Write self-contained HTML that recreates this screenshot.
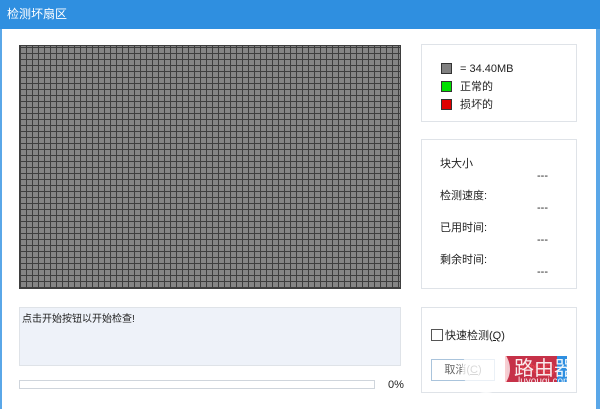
<!DOCTYPE html>
<html><head><meta charset="utf-8"><style>
body{margin:0;width:600px;height:409px;overflow:hidden;background:#fff;font-family:"Liberation Sans","Noto Sans CJK SC",sans-serif;font-size:11px;color:#222;position:relative}
.abs{position:absolute}
.title{left:0;top:0;width:600px;height:29px;background:#2f8fe0;color:#fff;font-size:12px;line-height:29px;text-indent:7px}
.bl{left:0;top:29px;width:2px;height:380px;background:#5aa7e8}
.br{left:596px;top:29px;width:4px;height:380px;background:#5aa7e8}
.grid{left:19px;top:45px;width:382px;height:244px;background-color:#858585;
background-image:repeating-linear-gradient(90deg,#3e3e3e 0 1px,transparent 1px 6px),repeating-linear-gradient(0deg,#3e3e3e 0 1px,transparent 1px 6px);border:1px solid #3e3e3e;box-sizing:border-box}
.box{border:1px solid #dfe3e8;box-sizing:border-box}
.sq{display:inline-block;width:9px;height:9px;border:1px solid #333;vertical-align:-2px;margin-right:8px}
</style></head><body>
<div class="abs title">检测坏扇区</div>
<div class="abs bl"></div><div class="abs br"></div>
<div class="abs grid"></div>
<div class="abs box" style="left:421px;top:44px;width:156px;height:78px"></div>
<div class="abs" style="left:441px;top:60px;line-height:18px">
<div><span class="sq" style="background:#808080"></span>= 34.40MB</div>
<div><span class="sq" style="background:#00e000"></span>正常的</div>
<div><span class="sq" style="background:#e00000"></span>损坏的</div></div>
<div class="abs box" style="left:421px;top:139px;width:156px;height:150px"></div>
<div class="abs" style="left:440px;top:155px">块大小</div><div class="abs" style="left:537px;top:170px">---</div>
<div class="abs" style="left:440px;top:187px">检测速度:</div><div class="abs" style="left:537px;top:202px">---</div>
<div class="abs" style="left:440px;top:219px">已用时间:</div><div class="abs" style="left:537px;top:234px">---</div>
<div class="abs" style="left:440px;top:251px">剩余时间:</div><div class="abs" style="left:537px;top:266px">---</div>
<div class="abs box" style="left:19px;top:307px;width:382px;height:59px;background:#eef2f9"></div>
<div class="abs" style="left:22px;top:310px;font-size:10px">点击开始按钮以开始检查!</div>
<div class="abs box" style="left:19px;top:380px;width:356px;height:9px;border-color:#cfd5dc"></div>
<div class="abs" style="left:388px;top:379px">0%</div>
<div class="abs box" style="left:421px;top:307px;width:156px;height:86px"></div>
<div class="abs" style="left:431px;top:329px;width:10px;height:10px;border:1px solid #555"></div>
<div class="abs" style="left:445px;top:327px">快速检测(<u>Q</u>)</div>
<div class="abs" style="left:431px;top:359px;width:64px;height:22px;border:1px solid #aac4dc;box-sizing:border-box;text-align:center;line-height:20px;color:#666">取消(<u>C</u>)</div>
<div class="abs" style="left:507px;top:356px;width:60px;height:26px;background:#2f8fe0;color:#fff;text-align:center;line-height:26px">开始(<u>S</u>)</div>
<div class="abs" style="left:505px;top:356px;width:52px;height:26px;background:#e0212d;opacity:.85"></div>
<div class="abs" style="left:462px;top:345px;width:48px;height:48px;border-radius:50%;background:rgba(255,255,255,.75)"></div>
<div class="abs" style="left:514px;top:352px;color:#fff;font-size:20px;opacity:.9">路由器</div>
<div class="abs" style="left:518px;top:376px;color:#fff;font-size:10px;opacity:.9">luyouqi.com</div>
</body></html>
